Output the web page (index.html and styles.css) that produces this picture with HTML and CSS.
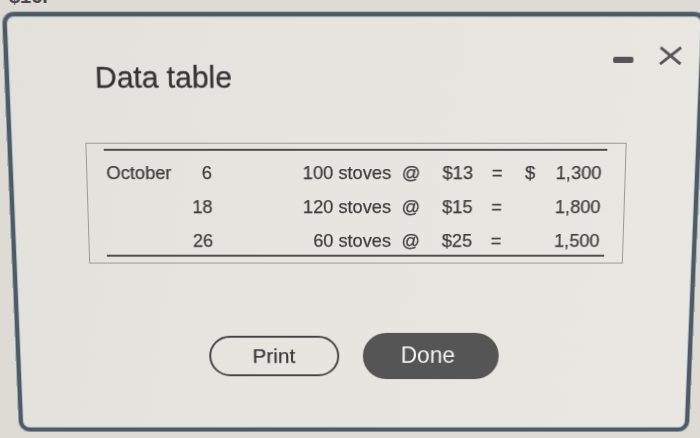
FILE: index.html
```html
<!DOCTYPE html>
<html lang="en">
<head>
<meta charset="utf-8">
<title>Data table</title>
<link rel="stylesheet" href="styles.css">
</head>
<body>
<div class="prev"><span>$16.</span></div>
<div class="dialog">
  <div class="head">
    <h1 class="title">Data table</h1>
    <div class="controls">
      <span class="minimize"></span>
      <svg class="close" viewBox="0 0 22.4 18" aria-label="Close">
        <path d="M1.2 1 L21.2 17 M21.2 1 L1.2 17" />
      </svg>
    </div>
  </div>
  <div class="table-box">
    <div class="rule"></div>
    <div class="grid">
      <span class="c-month">October</span><span class="c-day">6</span><span class="c-qty">100 stoves</span><span class="c-at">@</span><span class="c-price">$13</span><span class="c-eq">=</span><span class="c-cur">$</span><span class="c-amt">1,300</span>
      <span class="c-month"></span><span class="c-day">18</span><span class="c-qty">120 stoves</span><span class="c-at">@</span><span class="c-price">$15</span><span class="c-eq">=</span><span class="c-cur"></span><span class="c-amt">1,800</span>
      <span class="c-month"></span><span class="c-day">26</span><span class="c-qty">60 stoves</span><span class="c-at">@</span><span class="c-price">$25</span><span class="c-eq">=</span><span class="c-cur"></span><span class="c-amt">1,500</span>
    </div>
    <div class="rule rule-bottom"></div>
  </div>
  <div class="actions">
    <button class="btn btn-print">Print</button>
    <button class="btn btn-done">Done</button>
  </div>
</div>
</body>
</html>
```
FILE: styles.css
```css
html, body {
  margin: 0;
  padding: 0;
}
body {
  width: 700px;
  height: 438px;
  overflow: hidden;
  background: #dedbd4;
  font-family: "Liberation Sans", Arial, sans-serif;
  color: #3b3b3b;
}
.prev {
  height: 16px;
  overflow: hidden;
  padding-left: 9px;
}
.prev span {
  display: block;
  margin-top: -14px;
  font-size: 20px;
  line-height: 20px;
  font-weight: bold;
  color: #4a4a4a;
}
.dialog {
  box-sizing: border-box;
  width: 686px;
  height: 422px;
  margin-left: 11px;
  border: 4px solid #4e5b64;
  border-radius: 11px;
  background: linear-gradient(100deg, #e3e1db 0%, #e7e5df 45%, #e9e7e2 100%);
  box-shadow: inset 0 0 0 1px #b7c3ca, 0 0 0 1px #a7b6c0;
  transform: perspective(1000px) rotateX(-6.8deg);
}
.head {
  display: flex;
  justify-content: space-between;
  align-items: flex-start;
  padding: 29px 17.6px 0 84.6px;
}
.title {
  margin: 12.6px 0 0;
  font-size: 29.5px;
  line-height: 34px;
  font-weight: normal;
  color: #333333;
  -webkit-text-stroke: 0.3px #333333;
}
.controls {
  display: flex;
  align-items: flex-start;
  gap: 25.4px;
}
.minimize {
  width: 19.6px;
  height: 6px;
  margin-top: 9.9px;
  background: #555555;
  border-radius: 2px;
}
.close {
  display: block;
  width: 22.4px;
  height: 18px;
}
.close path {
  fill: none;
  stroke: #555555;
  stroke-width: 2.8;
}
.table-box {
  box-sizing: border-box;
  width: 536.6px;
  margin: 47.7px 0 0 72.7px;
  border: 1px solid #9a9a98;
  padding: 5px 18.3px 6px 17.3px;
}
.rule {
  height: 2px;
  background: #4e4e4e;
}
.rule-bottom {
  margin-top: -3px;
}
.grid {
  display: grid;
  grid-template-columns: 67px 40px 178px 51px 49px 33px 30px 46px;
  grid-auto-rows: 34px;
  padding-top: 5px;
  font-size: 18.2px;
  line-height: 34px;
  color: #3e3e3e;
  -webkit-text-stroke: 0.25px #3e3e3e;
  white-space: nowrap;
}
.c-month { padding-left: 2px; }
.c-day, .c-qty, .c-amt { text-align: right; }
.c-at { padding-left: 10.4px; }
.actions {
  display: flex;
  align-items: center;
  gap: 24.3px;
  margin-top: 70.8px;
  padding-left: 191.7px;
}
.btn {
  box-sizing: border-box;
  padding: 0;
  font-family: "Liberation Sans", Arial, sans-serif;
  cursor: pointer;
}
.btn-print {
  width: 132px;
  height: 42.6px;
  border: 2px solid #444444;
  border-radius: 22px;
  background: transparent;
  color: #383838;
  font-size: 21px;
  -webkit-text-stroke: 0.25px #383838;
}
.btn-done {
  width: 138px;
  height: 47.8px;
  border: none;
  border-radius: 24px;
  background: #555555;
  color: #f4f4f4;
  font-size: 23px;
  padding-right: 6px;
}
```
